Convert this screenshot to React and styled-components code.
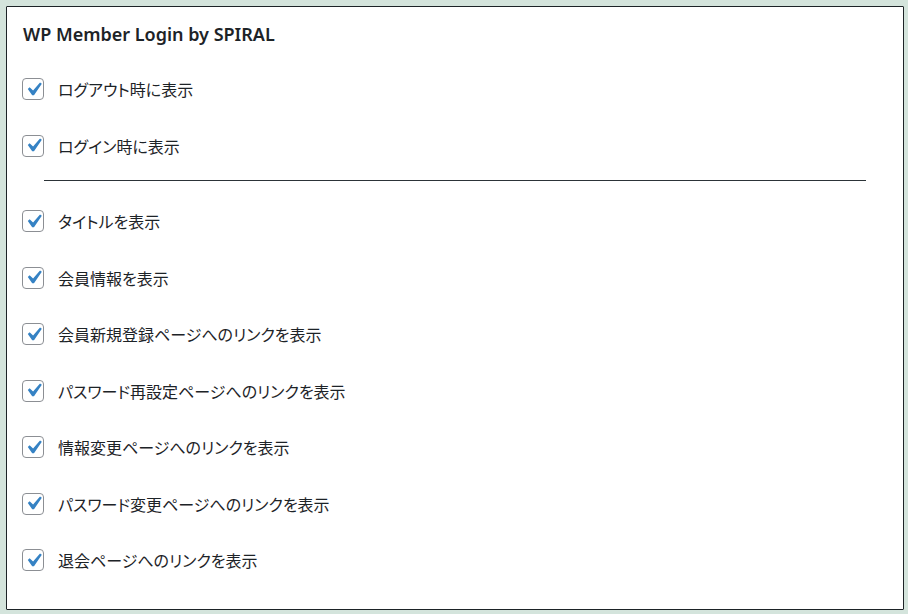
import React from 'react';
import styled, { createGlobalStyle } from 'styled-components';

const GlobalStyle = createGlobalStyle`
  html, body {
    margin: 0;
    padding: 0;
    background: #d4e4dc;
  }
  body {
    font-family: "Noto Sans", "Noto Sans CJK JP", sans-serif;
    color: #1d2327;
  }
`;

const Page = styled.div`
  padding: 6px 4px 4px 6px;
  box-sizing: border-box;
  width: 908px;
  height: 614px;
`;

const Panel = styled.section`
  box-sizing: border-box;
  height: 100%;
  background: #fff;
  border: 1px solid #1d2327;
  border-radius: 1px;
  padding: 14px 16px 20px 15px;
`;

const Title = styled.h2`
  margin: 0 0 14px 1px;
  font-family: "Noto Sans", "Noto Sans CJK JP", sans-serif;
  font-size: 18px;
  font-weight: 600;
  line-height: 26px;
  color: #1d2327;
`;

const Row = styled.label`
  display: flex;
  align-items: center;
  gap: 14px;
  height: 56.5px;
  font-family: "Noto Sans CJK JP", sans-serif;
  font-size: 16px;
  font-feature-settings: "palt";
  color: #1d2327;
`;

const Box = styled.span`
  box-sizing: border-box;
  width: 22px;
  height: 22px;
  flex: none;
  border: 1px solid #8c8f94;
  border-radius: 4px;
  background: #fff;
  display: flex;
  align-items: center;
  justify-content: center;
  overflow: visible;
  svg {
    flex: none;
    width: 27px;
    height: 27px;
  }
`;

const Divider = styled.hr`
  border: 0;
  border-top: 1px solid #2c3338;
  margin: 6px 21px 12px 22px;
`;

const Check = ({ label }) => (
  <Row>
    <Box>
      <svg viewBox="0 0 20 20">
        <path d="M14.83 4.89l1.34.94-5.81 8.38H9.02L5.78 9.67l1.34-1.25 2.57 2.4z" fill="#3582c4" />
      </svg>
    </Box>
    {label}
  </Row>
);

const topItems = ['ログアウト時に表示', 'ログイン時に表示'];
const items = [
  'タイトルを表示',
  '会員情報を表示',
  '会員新規登録ページへのリンクを表示',
  'パスワード再設定ページへのリンクを表示',
  '情報変更ページへのリンクを表示',
  'パスワード変更ページへのリンクを表示',
  '退会ページへのリンクを表示',
];

export default function App() {
  return (
    <Page>
      <GlobalStyle />
      <Panel>
        <Title>WP Member Login by SPIRAL</Title>
        {topItems.map((t) => <Check key={t} label={t} />)}
        <Divider />
        {items.map((t) => <Check key={t} label={t} />)}
      </Panel>
    </Page>
  );
}
